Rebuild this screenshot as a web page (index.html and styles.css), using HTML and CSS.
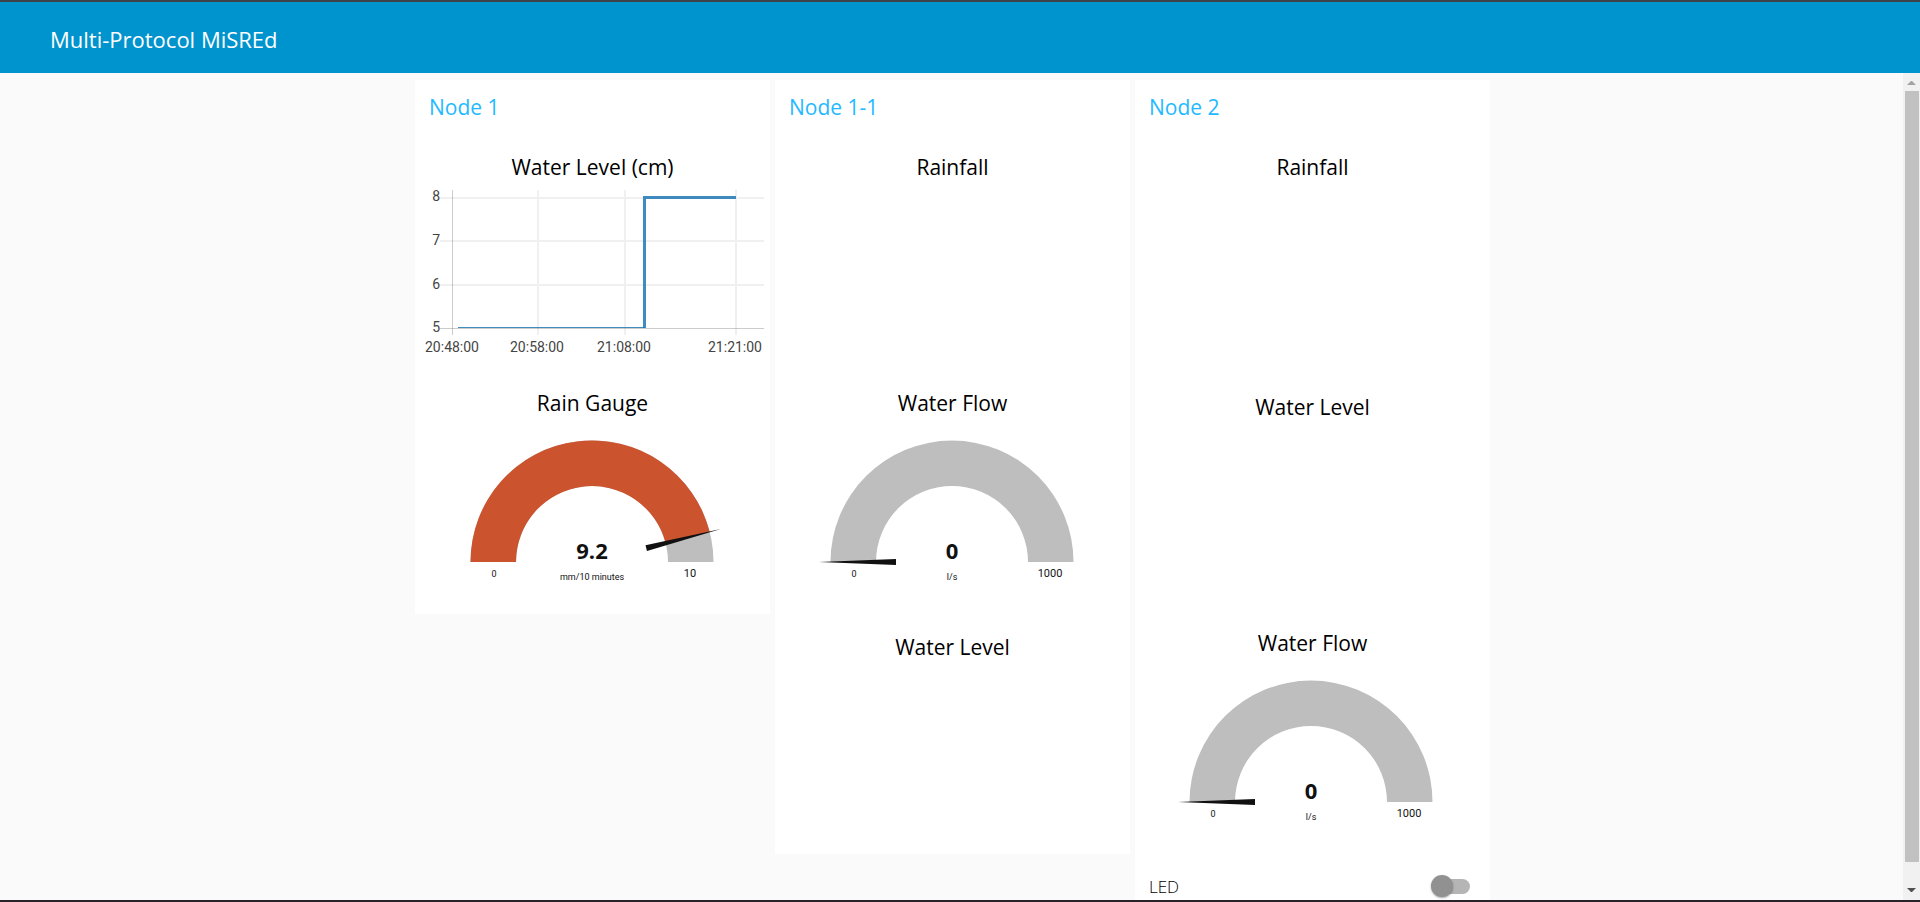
FILE: index.html
```
<!DOCTYPE html>
<html lang="en">
<head>
<meta charset="utf-8">
<title>Multi-Protocol MiSREd</title>
<link rel="stylesheet" href="styles.css">
</head>
<body>
<header class="toolbar"><h1 class="toolbar-title">Multi-Protocol MiSREd</h1></header>
<div class="viewport">
  <main class="dashboard">
    <section class="card">
      <h2 class="card-title">Node 1</h2>
      <div class="widget widget-chart">
        <h3 class="widget-title">Water Level (cm)</h3>
        <svg class="plot" viewBox="0 1 355 190" role="img" aria-label="Water level over time">
          <g class="grid">
            <path d="M123 10V155M210 10V155M321 10V155M25 18H349M25 61H349M25 105H349"/>
            <path class="axis" d="M37.500 10V155M25 148.500H349"/>
          </g>
          <path class="series-thin" d="M43 147.500H230"/>
          <path class="series" d="M229.500 148V17.500H321"/>
          <g class="tick tick-y">
            <text x="25" y="21">8</text><text x="25" y="65">7</text><text x="25" y="109">6</text><text x="25" y="152">5</text>
          </g>
          <g class="tick tick-x">
            <text x="37" y="172">20:48:00</text><text x="122" y="172">20:58:00</text><text x="209" y="172">21:08:00</text><text x="320" y="172">21:21:00</text>
          </g>
        </svg>
      </div>
      <div class="widget widget-gauge">
        <h3 class="widget-title">Rain Gauge</h3>
        <svg class="plot" viewBox="0 1 355 197" role="img" aria-label="Rain gauge 9.2 mm/10 minutes">
          <g transform="translate(177 146)">
            <path class="arc" d="M-121.500 0A121.500 121.500 0 0 1 121.500 0H76A76 76 0 0 0-76 0Z"/>
            <path class="arc-value" d="M-121.500 0A121.500 121.500 0 0 1 117.700-30.200L73.600-18.900A76 76 0 0 0-76 0Z"/>
            <path class="needle" transform="rotate(165.600)" d="M-133 0L-56-3V3Z"/>
            <text class="value" x="0" y="-3">9.2</text>
            <text class="unit" x="0" y="18">mm/10 minutes</text>
            <text class="min" x="-98" y="15">0</text>
            <text class="max" x="98" y="15">10</text>
          </g>
        </svg>
      </div>
    </section>

    <section class="card">
      <h2 class="card-title">Node 1-1</h2>
      <div class="widget widget-chart"><h3 class="widget-title">Rainfall</h3></div>
      <div class="widget widget-gauge">
        <h3 class="widget-title">Water Flow</h3>
        <svg class="plot" viewBox="0 1 355 197" role="img" aria-label="Water flow 0 l/s">
          <g transform="translate(177 146)">
            <path class="arc" d="M-121.500 0A121.500 121.500 0 0 1 121.500 0H76A76 76 0 0 0-76 0Z"/>
            <path class="needle" d="M-133 0L-56-3V3Z"/>
            <text class="value" x="0" y="-3">0</text>
            <text class="unit" x="0" y="18">l/s</text>
            <text class="min" x="-98" y="15">0</text>
            <text class="max" x="98" y="15">1000</text>
          </g>
        </svg>
      </div>
      <div class="widget widget-chart"><h3 class="widget-title">Water Level</h3></div>
    </section>

    <section class="card">
      <h2 class="card-title">Node 2</h2>
      <div class="widget widget-chart"><h3 class="widget-title">Rainfall</h3></div>
      <div class="widget widget-chart"><h3 class="widget-title">Water Level</h3></div>
      <div class="widget widget-gauge">
        <h3 class="widget-title">Water Flow</h3>
        <svg class="plot" viewBox="0 1 355 197" role="img" aria-label="Water flow 0 l/s">
          <g transform="translate(176 146)">
            <path class="arc" d="M-121.500 0A121.500 121.500 0 0 1 121.500 0H76A76 76 0 0 0-76 0Z"/>
            <path class="needle" d="M-133 0L-56-3V3Z"/>
            <text class="value" x="0" y="-3">0</text>
            <text class="unit" x="0" y="18">l/s</text>
            <text class="min" x="-98" y="15">0</text>
            <text class="max" x="98" y="15">1000</text>
          </g>
        </svg>
      </div>
      <div class="switch-row">
        <label class="switch-label" for="led">LED</label>
        <input class="switch" id="led" type="checkbox" role="switch">
      </div>
    </section>
  </main>
  <div class="scrollbar" aria-hidden="true">
    <svg class="scroll-arrow" viewBox="0 0 17 18"><path class="arrow-up" d="M4 12L8 8H9L13 12Z"/></svg>
    <div class="scroll-track"><div class="scroll-thumb"></div></div>
    <svg class="scroll-arrow" viewBox="0 0 17 18"><path class="arrow-down" d="M4 6H13L9 10H8Z"/></svg>
  </div>
</div>
</body>
</html>
```
FILE: styles.css
```
* { box-sizing: border-box; }

body {
  margin: 0;
  height: 100vh;
  display: flex;
  flex-direction: column;
  border-top: 2px solid #40444a;
  border-bottom: 2px solid #2a2228;
  background: #fafafa;
  color: #111;
  font-family: "Open Sans", "Noto Sans", sans-serif;
}

.toolbar {
  flex: none;
  display: flex;
  align-items: center;
  height: 71px;
  padding: 2px 50px 0;
  background: #0094ce;
  color: #fff;
}
.toolbar-title { margin: 0; font-size: 22px; line-height: 28px; font-weight: 400; }

.viewport { flex: 1; min-height: 0; display: flex; }

.dashboard {
  flex: 1;
  display: flex;
  justify-content: center;
  align-items: flex-start;
  gap: 5px;
  padding: 7px 0 5px 2px;
  overflow: auto;
  scrollbar-width: none;
}

.card { flex: 0 1 355px; background: #fff; }
.card-title {
  margin: 0;
  padding: 13px 14px;
  font-size: 21px;
  line-height: 28px;
  font-weight: 400;
  color: #1fb9ff;
}

.widget { min-height: 240px; }
.widget-chart { padding-top: 19px; }
.widget-gauge { padding-top: 15px; }
.widget-title {
  margin: 0;
  font-size: 21px;
  line-height: 28px;
  font-weight: 400;
  text-align: center;
  color: #000;
}
.plot { display: block; width: 100%; }

.grid path { fill: none; stroke: #000; stroke-opacity: 0.06; stroke-width: 2; }
.grid .axis { stroke-opacity: 0.2; stroke-width: 1; }
.series, .series-thin { fill: none; stroke: #1f77b4; stroke-width: 2; stroke-opacity: 0.85; }
.series-thin { stroke-width: 1; }
.series { stroke-width: 3; }
.tick { font-family: Roboto, sans-serif; font-size: 14px; fill: #444; }
.tick-y { text-anchor: end; }
.tick-x { text-anchor: middle; }

.arc { fill: #bebebe; }
.arc-value { fill: #cb532e; }
.needle { fill: #111; }
.value, .unit, .min, .max { text-anchor: middle; fill: #111; }
.value { font-size: 22px; font-weight: 700; }
.unit, .min, .max { font-family: Roboto, sans-serif; font-size: 9px; }
.max { font-size: 11px; }

.switch-row {
  display: flex;
  align-items: center;
  justify-content: space-between;
  height: 64px;
  padding: 0 20px 0 14px;
}
.switch-label { font-size: 17px; line-height: 24px; padding-top: 2px; font-weight: 300; color: #000; }
.switch {
  appearance: none;
  position: relative;
  width: 36px;
  height: 15px;
  margin: 0;
  border-radius: 8px;
  background: #b5b5b5;
}
.switch::before {
  content: "";
  position: absolute;
  left: -3px;
  top: -4px;
  width: 22px;
  height: 22px;
  border-radius: 50%;
  background: #919191;
  box-shadow: 0 1px 2px rgba(0, 0, 0, 0.35);
}
.switch:checked::before { left: 17px; background: #0094ce; }

.scrollbar { flex: none; width: 17px; display: flex; flex-direction: column; background: #f1f1f1; }
.scroll-arrow { flex: none; width: 17px; height: 18px; }
.arrow-up { fill: #a3a3a3; }
.arrow-down { fill: #505050; }
.scroll-track { flex: 1; padding: 0 1px 0 2px; }
.scroll-thumb { height: 97.5%; background: #c1c1c1; }
```
